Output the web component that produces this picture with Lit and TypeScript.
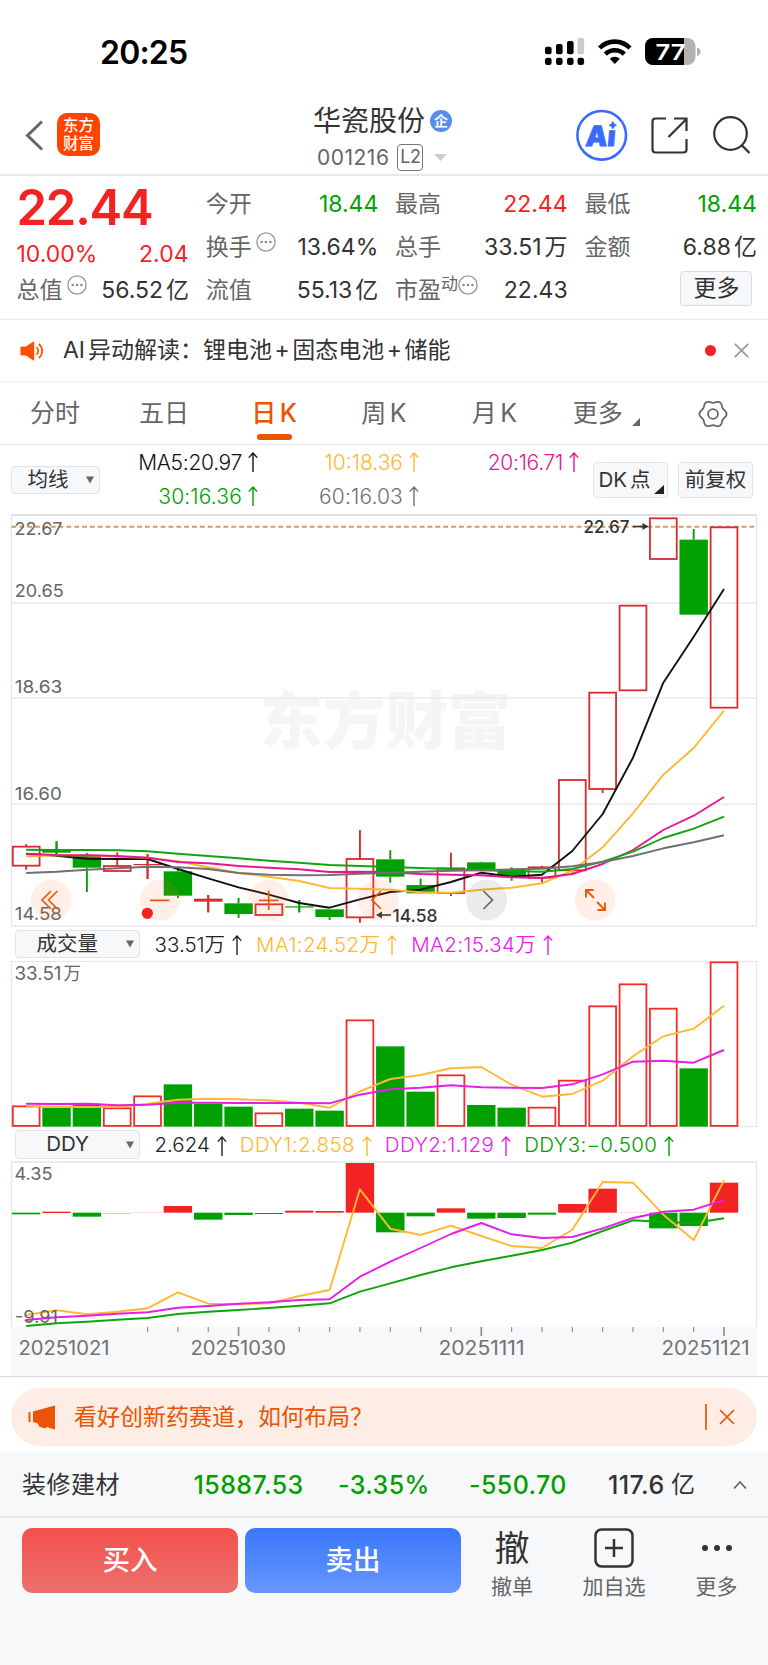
import { LitElement, html, css, svg } from "lit";
import { customElement } from "lit/decorators.js";

const COUNT = 24;
const X0 = 26.2;
const STEP = 30.34;
const BAR = 28;
const cx = (i: number) => X0 + i * STEP;
const line = (base: number, ys: number[]) =>
  ys.map((y, i) => `${cx(i).toFixed(1)},${(base + y / 3).toFixed(1)}`).join(" ");

type Candle = [string, number, number, number, number];
const CANDLES: Candle[] = [
  ["r", 1040, 1097, 1033, 1109], ["g", 1050, 1058, 1024, 1062], ["g", 1065, 1103, 1059, 1176],
  ["r", 1098, 1113, 1057, 1113], ["r", 1092, 1094, 1063, 1137], ["g", 1114, 1187, 1107, 1194],
  ["r", 1196, 1205, 1185, 1237], ["g", 1210, 1242, 1194, 1254], ["r", 1213, 1245, 1213, 1245],
  ["g", 1219, 1222, 1200, 1237], ["g", 1228, 1251, 1228, 1260], ["r", 1077, 1252, 990, 1268],
  ["g", 1078, 1130, 1051, 1148], ["g", 1155, 1180, 1136, 1180], ["r", 1105, 1179, 1058, 1188],
  ["g", 1087, 1112, 1085, 1112], ["g", 1108, 1130, 1102, 1142], ["r", 1102, 1133, 1097, 1150],
  ["r", 840, 1111, 840, 1118], ["r", 578, 867, 578, 879], ["r", 317, 571, 317, 571],
  ["r", 55, 177, 55, 177], ["g", 119, 344, 87, 344], ["r", 82, 623, 82, 623],
];
const MA: [string, number[]][] = [
  ["#111", [1061, 1067, 1076, 1077, 1077, 1107, 1135, 1162, 1184, 1209, 1223, 1198, 1176, 1169, 1146, 1118, 1130, 1124, 1053, 942, 773, 548, 410, 267]],
  ["#ffb833", [1069, 1066, 1066, 1070, 1073, 1084, 1102, 1119, 1130, 1143, 1164, 1166, 1169, 1177, 1178, 1169, 1163, 1150, 1112, 1042, 940, 824, 744, 632]],
  ["#e6168f", [1062, 1065, 1066, 1068, 1073, 1086, 1090, 1098, 1103, 1108, 1116, 1115, 1117, 1122, 1124, 1126, 1132, 1134, 1122, 1092, 1050, 990, 947, 891]],
  ["#0fa50f", [1049, 1050, 1050, 1051, 1054, 1061, 1068, 1075, 1082, 1088, 1095, 1098, 1101, 1104, 1107, 1111, 1113, 1115, 1107, 1085, 1055, 1014, 986, 950]],
  ["#707070", [1119, 1115, 1109, 1105, 1100, 1102, 1107, 1119, 1124, 1126, 1125, 1121, 1118, 1115, 1112, 1111, 1108, 1106, 1099, 1086, 1068, 1045, 1027, 1006]],
];
const VOLUME: [string, number][] = [
  ["r", 559], ["g", 563], ["g", 551], ["r", 565], ["r", 529], ["g", 493], ["g", 551], ["g", 560],
  ["r", 580], ["g", 566], ["g", 572], ["r", 301], ["g", 379], ["g", 515], ["r", 466], ["g", 555],
  ["g", 563], ["r", 563], ["r", 482], ["r", 259], ["r", 193], ["r", 266], ["g", 445], ["r", 127],
];
const VOLUME_MA: [string, number[]][] = [
  ["#ffb833", [559, 560, 561, 561, 551, 539, 536, 538, 541, 548, 563, 514, 477, 465, 445, 441, 494, 530, 522, 482, 409, 349, 326, 257]],
  ["#e61ee6", [551, 552, 551, 556, 554, 548, 548, 549, 549, 549, 550, 524, 508, 503, 496, 502, 503, 504, 493, 463, 425, 422, 428, 390]],
];
const DDY: [string, number, number][] = [
  ["g", 278, 283], ["r", 275, 279], ["g", 278, 290], ["fg", 279, 281], ["fr", 277, 279], ["r", 258, 278],
  ["g", 278, 299], ["g", 278, 285], ["g", 279, 282], ["r", 272, 278], ["r", 273, 278], ["r", 129, 278],
  ["g", 278, 337], ["g", 278, 289], ["r", 265, 278], ["g", 278, 296], ["g", 278, 294], ["g", 278, 284],
  ["r", 252, 278], ["r", 206, 278], ["fr", 277, 279], ["g", 278, 325], ["g", 278, 318], ["r", 188, 278],
];
const DDY_LINES: [string, number[]][] = [
  ["#0fa50f", [618, 610, 605, 599, 594, 582, 575, 570, 564, 557, 550, 515, 490, 465, 442, 424, 407, 390, 368, 333, 301, 306, 309, 295]],
  ["#ffb833", [585, 571, 583, 575, 565, 517, 551, 553, 550, 528, 510, 208, 326, 345, 317, 348, 378, 384, 329, 186, 188, 284, 360, 181]],
  ["#e61ee6", [600, 592, 587, 581, 577, 563, 558, 551, 547, 540, 538, 470, 425, 384, 342, 309, 343, 354, 351, 325, 294, 275, 269, 240]],
];

const label = (x: number, y: number, w: number, text: string, cls = "") =>
  svg`<text class="lab ${cls}" x=${x} y=${y} textLength=${w} lengthAdjust="spacingAndGlyphs">${text}</text>`;
const polylines = (base: number, set: [string, number[]][]) =>
  set.map(([c, ys]) => svg`<polyline fill="none" stroke=${c} stroke-width="1.9" stroke-linejoin="round" points=${line(base, ys)} />`);

const GEAR = Array.from({ length: 72 }, (_, i) => {
  const a = (i * Math.PI) / 36;
  const r = 12.4 + 1.2 * Math.cos(6 * a);
  return `${(r * Math.cos(a)).toFixed(2)},${(r * Math.sin(a)).toFixed(2)}`;
}).join(" ");

const dots = html`<svg class="dots" width="20" height="20" viewBox="0 0 20 20">
  <circle cx="10" cy="10" r="9.1" fill="none" stroke="#999" stroke-width="1.4" />
  <circle cx="5.6" cy="10" r="1.3" fill="#888" /><circle cx="10" cy="10" r="1.3" fill="#888" /><circle cx="14.4" cy="10" r="1.3" fill="#888" />
</svg>`;
const up = html`<svg class="up" width="10" height="20" viewBox="0 0 10 20">
  <path d="M5 20V1M.8 5.6 5 1l4.2 4.6" fill="none" stroke="currentColor" stroke-width="1.4" />
</svg>`;
const down = html`<svg class="down" width="8" height="8" viewBox="0 0 8 8"><path d="M0 .4h8L4 7.6z" fill="#666" /></svg>`;

@customElement("price-chart")
class PriceChart extends LitElement {
  static styles = css`
    :host { display: block; height: 420px; }
    svg { display: block; }
    .lab { font: 17.6px Inter, sans-serif; fill: #666; }
    .mark { font-weight: 500; fill: #333; }
    .water { font: 900 62px "Noto Sans CJK SC", sans-serif; fill: #f5f5f5; }
  `;
  render() {
    const red = "#d92b2f", green = "#00a000";
    return html`<svg width="768" height="420" viewBox="0 508 768 420">
      ${label(260, 744, 251, "东方财富", "water")}
      <path d="M11.5 603H756.5M11.5 698H756.5M11.5 804.3H756.5" stroke="#e8eaf0" stroke-width="1.4" />
      <rect x="11.5" y="515" width="745" height="411" fill="none" stroke="#e2e4e9" stroke-width="1.2" />
      <path d="M11.5 515H756.5" stroke="#d9dbdf" stroke-width="1.6" />
      <path d="M11.5 526.7H756.5" stroke="#d89a58" stroke-width="2" stroke-dasharray="4.8 3.05" />
      ${label(14.5, 534.7, 48, "22.67")} ${label(14.7, 597, 49, "20.65")} ${label(14.8, 692.5, 47.5, "18.63")}
      ${label(14.8, 799.5, 47, "16.60")} ${label(14.8, 920.3, 47, "14.58")}
      ${CANDLES.map(([k, t, b, h, l], i) => {
        const x = cx(i), T = 500 + t / 3, B = 500 + b / 3, H = 500 + h / 3, L = 500 + l / 3;
        const c = k === "r" ? red : green;
        const wick = svg`<path d=${`M${x} ${H}V${T}M${x} ${B}V${L}`} stroke=${c} stroke-width="1.9" />`;
        if (k === "g" || b - t < 10)
          return svg`${wick}<rect x=${x - BAR / 2 - 0.2} y=${T} width=${BAR + 0.4} height=${Math.max(1.2, B - T)} fill=${c} />
            ${b - t < 10 ? svg`<path d=${`M${x} ${H}V${L}`} stroke=${c} stroke-width="1.9" />` : ""}`;
        return svg`${wick}<rect x=${x - BAR / 2 + 0.6} y=${T} width=${BAR - 1.2} height=${B - T} fill="none" stroke=${c} stroke-width="1.8" />`;
      })}
      ${polylines(500, MA)}
      ${label(583.5, 532.8, 46, "22.67", "mark")}
      <path d="M633 526.5h14" stroke="#333" stroke-width="1.6" /><path d="M642.5 523l6 3.5-6 3.5z" fill="#333" />
      <path d="M378 915h13" stroke="#333" stroke-width="1.6" /><path d="M382 911.5l-6 3.5 6 3.5z" fill="#333" />
      ${label(392.5, 921.7, 45, "14.58", "mark")}
      ${[51.3, 160, 268.7, 378, 595].map((x) => svg`<circle cx=${x} cy="900" r="20.5" fill="#ff7a3c" fill-opacity=".12" />`)}
      <circle cx="486.7" cy="900" r="20.5" fill="#000" fill-opacity=".08" />
      <g fill="none" stroke="#f0560a" stroke-width="1.7">
        <path d="M51 891l-9 9 9 9M57.5 891l-9 9 9 9M150 900.3h19.5M259 900.3h19.5M268.7 890.5v19.5M381 891l-9 9 9 9" />
        <path d="M594 898l-8-8m0 7.5V890h7.5M597 902l8 8m0-7.5v7.5h-7.5" stroke-width="1.9" />
      </g>
      <path d="M483.5 891l9 9-9 9" fill="none" stroke="#666" stroke-width="1.7" />
      <circle cx="147.3" cy="913.3" r="5.6" fill="#f42323" />
    </svg>`;
  }
}

@customElement("volume-chart")
class VolumeChart extends LitElement {
  static styles = css`
    :host { display: block; height: 168px; }
    svg { display: block; }
    .lab { font: 18px Inter, "Noto Sans CJK SC", sans-serif; fill: #666; }
  `;
  render() {
    return html`<svg width="768" height="168" viewBox="0 960 768 168">
      <rect x="11.5" y="961.5" width="745" height="165" fill="none" stroke="#e4e6ea" stroke-width="1.2" />
      ${label(14.5, 979.5, 47, "33.51")} ${label(63.5, 979.5, 17.5, "万")}
      ${VOLUME.map(([k, t], i) => {
        const x = cx(i), T = 920 + t / 3, B = 1126.6;
        return k === "g"
          ? svg`<rect x=${x - 14.2} y=${T} width="28.4" height=${B - T} fill="#00a000" />`
          : svg`<rect x=${x - 13.4} y=${T} width="26.8" height=${B - T - 0.7} fill="none" stroke="#f42b2b" stroke-width="1.8" />`;
      })}
      ${polylines(920, VOLUME_MA)}
    </svg>`;
  }
}

@customElement("ddy-chart")
class DdyChart extends LitElement {
  static styles = css`
    :host { display: block; height: 217px; }
    svg { display: block; }
    .lab { font: 17.6px Inter, sans-serif; fill: #666; }
    .date { font-size: 19.4px; fill: #717171; }
  `;
  render() {
    const fills: Record<string, string> = { g: "#00a000", r: "#f42323", fg: "#8fd08f", fr: "#fbc9c9" };
    return html`<svg width="768" height="217" viewBox="0 1161 768 217">
      <rect x="11" y="1327" width="746" height="50" fill="#f7f8fa" />
      <path d="M11.5 1327V1162H756.5V1327" fill="none" stroke="#e4e6ea" stroke-width="1.4" />
      ${label(14.5, 1179.7, 38, "4.35")}
      ${DDY.map(([k, t, b], i) => svg`<rect x=${cx(i) - 14.2} y=${1120 + t / 3} width="28.4" height=${(b - t) / 3} fill=${fills[k]} />`)}
      ${polylines(1120, DDY_LINES)}
      ${label(15, 1323, 43, "-9.91")}
      ${Array.from({ length: COUNT - 4 }, (_, n) => n + 4).map((i) => {
        const major = i % 8 === 7;
        return svg`<path d=${`M${cx(i)} 1327v${major ? 9 : 5}`} stroke="#8a8a8a" stroke-width=${major ? 1.6 : 1.1} />`;
      })}
      ${label(18.5, 1354.8, 91, "20251021", "date")} ${label(190.5, 1354.8, 95.5, "20251030", "date")}
      ${label(438.5, 1354.8, 86, "20251111", "date")} ${label(661.5, 1354.8, 88, "20251121", "date")}
      <path d="M0 1376.6H768" stroke="#dcdde3" stroke-width="1.4" />
    </svg>`;
  }
}

@customElement("app-root")
class AppRoot extends LitElement {
  static styles = css`
    :host { display: block; width: 768px; height: 1665px; overflow: hidden; background: #fff; color: #333;
      font-family: Inter, "Noto Sans CJK SC", sans-serif; font-size: 23px; line-height: 1; }
    * { box-sizing: border-box; }
    svg { display: block; flex: none; }
    .red { color: #f42323; } .green { color: #00a000; } .black { color: #111; } .amber { color: #ffb833; }
    .pink { color: #e6168f; } .violet { color: #e61ee6; } .gray { color: #707070; }
    .status { height: 88px; padding: 35px 67px 0 100px; display: flex; justify-content: space-between; color: #000; }
    .clock { font-size: 32px; font-weight: 600; line-height: 36px; letter-spacing: -0.8px; }
    .sys { font: 600 22px Inter, sans-serif; }
    .nav { height: 88px; border-bottom: 2px solid #e8e8e8; display: grid; grid-template-columns: 300px 1fr 214px; }
    .left { display: flex; gap: 12px; padding: 25px 0 0 25px; }
    .back { margin-top: 7px; }
    .logo { width: 43px; height: 43px; border-radius: 10px; background: #ff4400; color: #fff; font-weight: 500;
      font-size: 15.5px; line-height: 17.5px; padding-top: 4px; text-align: center; margin-left: 1px; }
    .title { display: flex; flex-direction: column; padding: 17px 0 0 13px; gap: 6.5px; }
    .name { display: flex; align-items: center; gap: 5px; font-size: 28px; height: 32px; }
    .ent { width: 22px; height: 22px; border-radius: 11px; background: #5b8cec; color: #fff; font-size: 14px; font-weight: 700;
      line-height: 21px; text-align: center; }
    .code { display: flex; align-items: center; color: #666; font-size: 21px; height: 28px; padding-left: 4px; letter-spacing: 0.5px; }
    .l2 { margin-left: 8px; width: 26px; height: 27px; border: 1.5px solid #777; border-radius: 4px; font-size: 18px;
      line-height: 24px; text-align: center; letter-spacing: -0.5px; }
    .caret { margin-left: 11px; }
    .ai { font: 900 28px Inter, sans-serif; }
    .quote { height: 144px; border-bottom: 1px solid #ececec; padding: 7px 0 0 16.5px; display: grid;
      grid-template-columns: repeat(4, 172px); column-gap: 17.3px; }
    .cell { height: 43px; display: flex; align-items: center; justify-content: space-between; color: #666; line-height: 43px; }
    .val { color: #333; display: flex; gap: 3px; letter-spacing: 0; margin-right: -0.5px; }
    .val.red { color: #f42323; } .val.green { color: #00a000; }
    .lbl { display: flex; }
    .dots { margin: 6px 0 0 4px; }
    .sup { font-size: 17px; line-height: 31px; }
    .sup + .dots { margin-left: 0; }
    .price { font-size: 49px; font-weight: 600; line-height: 50px; letter-spacing: -1.2px; }
    .chg { display: flex; justify-content: space-between; line-height: 42px; height: 36px; }
    .more { width: 72px; height: 35px; border: 1px solid #d9dde3; border-radius: 4px; background: #f7f8fa; color: #333;
      line-height: 33px; text-align: center; margin: 2px 4px 0 auto; }
    .news { height: 63px; border-bottom: 2px solid #f5f5f5; display: flex; align-items: center; padding: 0 19px 0 20px; }
    .news p { margin: 0 auto 0 20px; display: flex; white-space: pre; }
    .cjk { margin-left: 3px; }
    .plus { margin: 0 2.5px; }
    .news i { width: 11px; height: 11px; border-radius: 6px; background: #f42323; margin-right: 18px; }
    .tabs { height: 62px; border-bottom: 1px solid #ececec; display: grid; align-items: center;
      grid-template-columns: 110px 108px 112px 108px 113px 111px 101px; color: #666; font-size: 25px; }
    .tab { text-align: center; display: flex; justify-content: center; gap: 3.5px; position: relative; }
    .tab.on { color: #ea5404; font-weight: 500; }
    .tab.on::after { content: ""; position: absolute; width: 35px; height: 6px; border-radius: 3px; background: #ea5404; top: 33px; }
    .corner { align-self: flex-end; margin-left: 6px; }
    .ma { height: 63px; display: flex; padding: 0 15px 0 11px; }
    .box { border: 1.5px solid #e0e3e9; border-radius: 4px; background: #f7f8fa; display: flex; align-items: center; justify-content: center; }
    .sel { width: 89px; height: 28px; margin-top: 21px; font-size: 20.5px; gap: 17px; padding-left: 10px; }
    .mas { width: 493px; display: grid; grid-template-columns: 158px 161px 160px; grid-template-rows: 34px 34px; font-size: 21px; font-weight: 350; }
    .mas span { display: flex; justify-content: flex-end; align-items: center; gap: 6px; }
    .mas .black, .mas .pink { letter-spacing: -0.3px; }
    .mas .green, .mas .gray { letter-spacing: 0.15px; }
    .adj { height: 36px; width: 75px; margin-top: 17px; font-size: 20.5px; }
    .adj + .adj { margin-left: 10px; }
    .dk { gap: 3px; align-items: center; padding-left: 1px; }
    .dk svg { align-self: flex-end; margin-bottom: 3px; }
    .legend { display: flex; align-items: center; font-size: 20.5px; height: 32px; font-weight: 350; padding-left: 15px; }
    .legend .box { width: 125px; height: 28.5px; font-weight: 400; margin-right: 14.5px; justify-content: flex-end; padding-right: 5px; font-size: 20.5px; }
    .legend .down { margin-left: 28px; }
    .ddy { height: 33px; }
    .ddy .down { margin-left: 37px; }
    .legend span { display: flex; align-items: center; gap: 7px; margin-right: 13px; letter-spacing: 0.35px; padding-top: 2px; }
    .legend .dark { color: #222; letter-spacing: 0; }
    .vol span { margin-right: 14px; }
    .banner { margin: 10px 11px 6px; height: 58px; border-radius: 29px; background: #fdede5; color: #ea5404; display: flex; align-items: center;
      padding: 0 22px 0 17px; }
    .banner p { margin: 0 auto 0 18px; }
    .index { background: #f7f8fa; height: 66px; border-bottom: 2px solid #e5e7ea; display: grid; align-items: center; padding: 2px 0 0 22px;
      grid-template-columns: 171.5px 144.5px 131px 139px 63px 62px auto; font-size: 24px; letter-spacing: 0.5px; }
    .index b { font-weight: 500; font-size: 25px; letter-spacing: 0.4px; }
    .foot { background: #f7f8fa; height: 148px; padding: 10px 22px; display: flex; font-size: 21px; color: #666; }
    .btn { width: 216px; height: 64.5px; border-radius: 10px; color: #fff; font-size: 27.5px; font-weight: 500; line-height: 65px; text-align: center; margin-right: 7px; }
    .buy { background: linear-gradient(#f2504b, #ec716d); } .sell { background: linear-gradient(#3a76f8, #6797ff); }
    .act { display: flex; flex-direction: column; align-items: center; gap: 8px; }
    .cancel { margin-left: 23px; }
    .add { margin-left: 49.5px; }
    .rest { margin-left: 50px; }
    .act strong { font-weight: 400; font-size: 35px; height: 40px; line-height: 40px; color: #333; }
    .act svg { height: 40px; }
  `;

  render() {
    return html`
      <div class="status">
        <div class="clock">20:25</div>
        <svg class="sys" width="158" height="32" viewBox="543 35 158 32">
          <rect x="545" y="46.7" width="6.6" height="7.6" rx="2" /><rect x="556" y="44" width="6.6" height="10.3" rx="2" />
          <rect x="567" y="41" width="6.6" height="13.3" rx="2" /><rect x="577.5" y="38" width="6.6" height="16.3" rx="2" fill="#ccc" />
          <rect x="545" y="57.7" width="6.6" height="7.4" rx="2.4" /><rect x="556" y="57.7" width="6.6" height="7.4" rx="2.4" />
          <rect x="567" y="57.7" width="6.6" height="7.4" rx="2.4" /><rect x="577.5" y="57.7" width="6.6" height="7.4" rx="2.4" />
          <path d="M599.6 48a21.4 21.4 0 0 1 30.400 0M605.3 54.2a13.4 13.4 0 0 1 19 0" fill="none" stroke="#000" stroke-width="4.6" />
          <path d="M614.8 64l-5-5.200a7 7 0 0 1 10 0z" />
          <rect x="645" y="38" width="50.5" height="27" rx="8" fill="#b3b3b3" />
          <path d="M653 38h31v27h-31a8 8 0 0 1-8-8V46a8 8 0 0 1 8-8z" /><path d="M697 47.5c4.6.6 4.6 8 0 8.6z" fill="#b3b3b3" />
          <text x="655.5" y="60" fill="#fff" textLength="30" lengthAdjust="spacingAndGlyphs">77</text>
        </svg>
      </div>
      <div class="nav">
        <div class="left">
          <svg class="back" width="19" height="31" viewBox="0 0 19 31"><path d="M17 1.5 2.5 15.5 17 29.5" fill="none" stroke="#666" stroke-width="3" /></svg>
          <div class="logo">东方<br />财富</div>
        </div>
        <div class="title">
          <div class="name">华瓷股份<span class="ent">企</span></div>
          <div class="code">001216<span class="l2">L2</span>
            <svg class="caret" width="13" height="7" viewBox="0 0 13 7"><path d="M0 0h13L6.5 7z" fill="#ccc" /></svg>
          </div>
        </div>
        <svg width="214" height="86" viewBox="554 88 214 86">
          <circle cx="601.7" cy="135.3" r="24.3" fill="none" stroke="#3a6bff" stroke-width="2.6" />
          <text class="ai" transform="translate(585 145.5) skewX(-5)" fill="#3a6bff" stroke="#3a6bff" stroke-width=".8" textLength="30" lengthAdjust="spacingAndGlyphs">Aı</text>
          <path d="M612.8 121.600q.6 3 3.600 3.600-3 .6-3.600 3.600-.6-3-3.600-3.600 3-.6 3.600-3.600z" fill="#3a6bff" stroke="#3a6bff" stroke-width="1" />
          <path d="M666 118.5h-10.5a3 3 0 0 0-3 3v28a3 3 0 0 0 3 3h28a3 3 0 0 0 3-3V139M674 118.5h12.5v12.5M686.5 119 668.5 137" fill="none" stroke="#333" stroke-width="2.2" />
          <circle cx="730.5" cy="133.5" r="16.3" fill="none" stroke="#333" stroke-width="2.2" /><path d="M741.5 145l8 8" stroke="#333" stroke-width="2.4" />
        </svg>
      </div>
      <div class="quote">
        <div>
          <div class="price red">22.44</div>
          <div class="chg red"><span>10.00%</span><span>2.04</span></div>
          <div class="cell"><span class="lbl">总值${dots}</span><span class="val">56.52<span>亿</span></span></div>
        </div>
        <div>
          <div class="cell">今开<span class="val green">18.44</span></div>
          <div class="cell"><span class="lbl">换手${dots}</span><span class="val">13.64%</span></div>
          <div class="cell">流值<span class="val">55.13<span>亿</span></span></div>
        </div>
        <div>
          <div class="cell">最高<span class="val red">22.44</span></div>
          <div class="cell">总手<span class="val">33.51<span>万</span></span></div>
          <div class="cell"><span class="lbl">市盈<span class="sup">动</span>${dots}</span><span class="val">22.43</span></div>
        </div>
        <div>
          <div class="cell">最低<span class="val green">18.44</span></div>
          <div class="cell">金额<span class="val">6.88<span>亿</span></span></div>
          <div class="more">更多</div>
        </div>
      </div>
      <div class="news">
        <svg width="23" height="20" viewBox="0 0 23 20">
          <path d="M1.5 5.500h4.500L13 .8q1.200-.6 1.200.8v16.800q0 1.400-1.200.8L6 14.500H1.500Q.4 14.500.4 13.300V6.700q0-1.200 1.100-1.200z" fill="#ff5000" />
          <path d="M16.5 6.200a5 5 0 0 1 0 7.600M18.800 3a9 9 0 0 1 0 14" fill="none" stroke="#ff5000" stroke-width="1.7" />
        </svg>
        <p><span>AI</span><span class="cjk">异动解读：锂电池</span><span class="plus">+</span>固态电池<span class="plus">+</span>储能</p>
        <i></i>
        <svg width="15" height="15" viewBox="0 0 15 15"><path d="M.8.8l13.4 13.4M14.2.8.8 14.2" stroke="#999" stroke-width="1.7" /></svg>
      </div>
      <div class="tabs">
        <div class="tab">分时</div><div class="tab">五日</div><div class="tab on">日<span>K</span></div>
        <div class="tab">周<span>K</span></div><div class="tab">月<span>K</span></div>
        <div class="tab">更多<svg class="corner" width="8" height="8" viewBox="0 0 8 8"><path d="M8 0v8H0z" fill="#666" /></svg></div>
        <div class="tab"><svg width="30" height="30" viewBox="-15 -15 30 30">
          <polygon points=${GEAR} fill="none" stroke="#666" stroke-width="1.8" />
          <circle r="4.9" fill="none" stroke="#666" stroke-width="1.8" /></svg></div>
      </div>
      <div class="ma">
        <div class="box sel">均线${down}</div>
        <div class="mas">
          <span class="black">MA5:20.97${up}</span><span class="amber">10:18.36${up}</span><span class="pink">20:16.71${up}</span>
          <span class="green">30:16.36${up}</span><span class="gray">60:16.03${up}</span>
        </div>
        <div class="box adj dk"><span>DK</span>点<svg width="10" height="9" viewBox="0 0 10 9"><path d="M10 0v9H0z" fill="#222" /></svg></div>
        <div class="box adj">前复权</div>
      </div>
      <price-chart></price-chart>
      <div class="legend vol">
        <div class="box">成交量${down}</div>
        <span class="dark">33.51万${up}</span><span class="amber">MA1:24.52万${up}</span><span class="violet">MA2:15.34万${up}</span>
      </div>
      <volume-chart></volume-chart>
      <div class="legend ddy">
        <div class="box">DDY${down}</div>
        <span class="dark">2.624${up}</span><span class="amber">DDY1:2.858${up}</span><span class="violet">DDY2:1.129${up}</span><span class="green">DDY3:−0.500${up}</span>
      </div>
      <ddy-chart></ddy-chart>
      <div class="banner">
        <svg width="28" height="25" viewBox="0 0 28 25"><path d="M1.5 7v10" stroke="#ea5404" stroke-width="2" />
          <path d="M5 6.5 27 .5v24l-5-1.5-3-1-2 1.5-6-2-1-3-5-1.5z" fill="#ea5404" /></svg>
        <p>看好创新药赛道，如何布局？</p>
        <svg width="30" height="28" viewBox="0 0 30 28"><path d="M1 1v26M15 7l14 14M29 7 15 21" stroke="#ea5404" stroke-width="1.7" fill="none" /></svg>
      </div>
      <div class="index">
        <span>装修建材</span><b class="green">15887.53</b><b class="green">-3.35%</b>
        <b class="green">-550.70</b><b>117.6</b><span>亿</span>
        <svg width="14" height="8" viewBox="0 0 14 8"><path d="M1 7.5 7 1l6 6.5" fill="none" stroke="#666" stroke-width="1.7" /></svg>
      </div>
      <div class="foot">
        <div class="btn buy">买入</div><div class="btn sell">卖出</div>
        <div class="act cancel"><strong>撤</strong>撤单</div>
        <div class="act add"><svg width="40" height="40" viewBox="0 0 40 40"><rect x="1.5" y="1.5" width="37" height="37" rx="6" fill="none" stroke="#333" stroke-width="2.5" />
          <path d="M20 11v18M11 20h18" stroke="#333" stroke-width="2.5" /></svg>加自选</div>
        <div class="act rest"><svg width="32" height="40" viewBox="0 0 32 40"><circle cx="4" cy="20" r="3" fill="#333" /><circle cx="16" cy="20" r="3" fill="#333" /><circle cx="28" cy="20" r="3" fill="#333" /></svg>更多</div>
      </div>`;
  }
}
